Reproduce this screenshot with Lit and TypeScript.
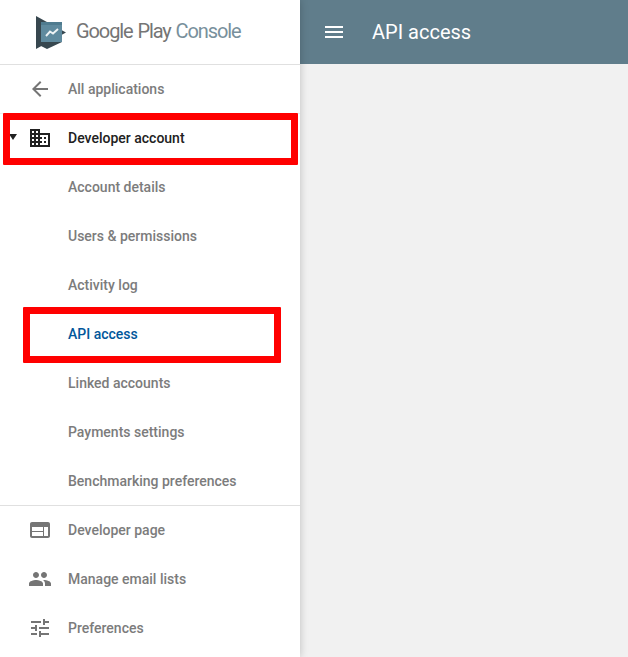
import { LitElement, html, css, svg } from "lit";
import { customElement } from "lit/decorators.js";

const ICONS: Record<string, string> = {
  back: "M20 11H7.83l5.59-5.59L12 4l-8 8 8 8 1.41-1.41L7.83 13H20v-2z",
  domain:
    "M12 7V3H2v18h20V7H12zM6 19H4v-2h2v2zm0-4H4v-2h2v2zm0-4H4V9h2v2zm0-4H4V5h2v2zm4 12H8v-2h2v2zm0-4H8v-2h2v2zm0-4H8V9h2v2zm0-4H8V5h2v2zm10 12h-8v-2h2v-2h-2v-2h2v-2h-2V9h8v10zm-2-8h-2v2h2v-2zm0 4h-2v2h2v-2z",
  web: "M20 4H4c-1.1 0-1.99.9-1.99 2L2 18c0 1.1.9 2 2 2h16c1.1 0 2-.9 2-2V6c0-1.1-.9-2-2-2zm-5 14H4v-4h11v4zm0-5H4V9h11v4zm5 5h-4V9h4v9z",
  people:
    "M16 11c1.66 0 2.99-1.34 2.99-3S17.66 5 16 5c-1.66 0-3 1.34-3 3s1.34 3 3 3zm-8 0c1.66 0 2.99-1.34 2.99-3S9.66 5 8 5C6.34 5 5 6.34 5 8s1.34 3 3 3zm0 2c-2.33 0-7 1.17-7 3.5V19h14v-2.5c0-2.33-4.67-3.5-7-3.5zm8 0c-.29 0-.62.02-.97.05 1.16.84 1.97 1.97 1.97 3.45V19h6v-2.5c0-2.33-4.67-3.5-7-3.5z",
  tune: "M3 17v2h6v-2H3zM3 5v2h10V5H3zm10 16v-2h8v-2h-8v-2h-2v6h2zM7 9v2H3v2h4v2h2V9H7zm14 4v-2H11v2h10zm-6-4h2V7h4V5h-4V3h-2v6z",
  menu: "M3 18h18v-2H3v2zm0-5h18v-2H3v2zm0-7v2h18V6H3z",
};

const icon = (name: string) =>
  html`<svg class="icon" viewBox="0 0 24 24" width="24" height="24"><path d=${ICONS[name]}></path></svg>`;

const logo = svg`
  <path d="M0 0 L30 16.5 L0 33 Z" fill="#37474f"/>
  <path d="M5 6 H26 V26 H5 Z" fill="#5f8a9e"/>
  <path d="M5 6 H26 V9 H5 Z" fill="#4f7b8f"/>
  <path d="M5 26 H26 L11 33 L5 30 Z" fill="#37474f"/>
  <path d="M10 20 L14 15.5 L17 17.5 L22 13" fill="none" stroke="#eef3f5" stroke-width="1.9"/>
`;

const SUB = [
  "Account details",
  "Users & permissions",
  "Activity log",
  "API access",
  "Linked accounts",
  "Payments settings",
  "Benchmarking preferences",
];

const BOTTOM: [string, string][] = [
  ["web", "Developer page"],
  ["people", "Manage email lists"],
  ["tune", "Preferences"],
];

@customElement("app-root")
export class AppRoot extends LitElement {
  static styles = css`
    :host {
      display: flex;
      position: relative;
      width: 628px;
      height: 657px;
      overflow: hidden;
      background: #f1f1f1;
      font-family: Roboto, "Liberation Sans", sans-serif;
    }
    .sidebar {
      width: 300px;
      flex: none;
      background: #fff;
      box-shadow: 0 0 8px rgba(0, 0, 0, 0.22);
      z-index: 1;
    }
    .brand {
      height: 64px;
      display: flex;
      align-items: center;
      padding-left: 36px;
      gap: 10px;
      border-bottom: 1px solid #e0e0e0;
      box-sizing: content-box;
    }
    .brand svg {
      flex: none;
    }
    .brand-text {
      font-size: 20px;
      line-height: 24px;
      letter-spacing: -1.1px;
      word-spacing: 1px;
      color: #757575;
      white-space: nowrap;
      margin-top: -3px;
    }
    .brand-text span {
      color: #78909c;
    }
    .row {
      height: 48px;
      display: flex;
      align-items: center;
      padding-left: 28px;
      gap: 16px;
      border-bottom: 1px solid transparent;
      font-size: 14px;
      font-weight: 500;
      color: #7c7c7c;
      white-space: nowrap;
    }
    .row.first {
      border-bottom-color: #eeeeee;
    }
    .row.sub {
      padding-left: 68px;
    }
    .row.open {
      color: #212121;
      padding-left: 9px;
      gap: 0;
    }
    .row.open .icon {
      fill: #212121;
      margin: 0 16px 0 11px;
    }
    .row.active {
      color: #01579b;
    }
    .row.end {
      border-bottom-color: #e0e0e0;
    }
    .caret {
      width: 0;
      height: 0;
      border-left: 4px solid transparent;
      border-right: 4px solid transparent;
      border-top: 6px solid #212121;
      margin-top: -2px;
    }
    .icon {
      flex: none;
      fill: #757575;
    }
    .main {
      flex: 1;
    }
    .bar {
      height: 64px;
      background: #607d8b;
      display: flex;
      align-items: center;
      padding-left: 22px;
      gap: 26px;
      color: #fff;
      font-size: 20px;
    }
    .bar .icon {
      fill: #fff;
    }
    .mark {
      position: absolute;
      z-index: 2;
      box-sizing: border-box;
      border: 7px solid #ff0000;
      border-radius: 1px;
    }
    .mark.one {
      left: 3px;
      top: 113px;
      width: 295px;
      height: 52px;
    }
    .mark.two {
      left: 23px;
      top: 307px;
      width: 258px;
      height: 56px;
    }
  `;

  render() {
    return html`
      <nav class="sidebar">
        <div class="brand">
          <svg viewBox="0 0 30 33" width="30" height="33">${logo}</svg>
          <div class="brand-text">Google Play <span>Console</span></div>
        </div>
        <div class="row first">${icon("back")}All applications</div>
        <div class="row open"><i class="caret"></i>${icon("domain")}Developer account</div>
        ${SUB.map(
          (s, i) =>
            html`<div class="row sub ${s === "API access" ? "active" : ""} ${i === SUB.length - 1 ? "end" : ""}">${s}</div>`
        )}
        ${BOTTOM.map(([i, t]) => html`<div class="row">${icon(i)}${t}</div>`)}
      </nav>
      <main class="main">
        <header class="bar">${icon("menu")}<span>API access</span></header>
      </main>
      <div class="mark one"></div>
      <div class="mark two"></div>
    `;
  }
}
